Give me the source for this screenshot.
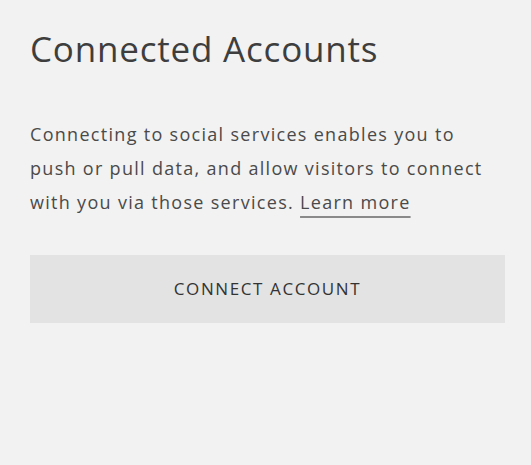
import React from 'react';

function App() {
    return (
        <div className="min-h-screen bg-[#f2f2f2] text-[#3e3e3e] font-['Open_Sans',sans-serif]">
            <div className="pl-[30px] pr-[26px] pt-[25px]">
                <h1 className="text-[35px] leading-[48px] font-normal tracking-[0.8px]">Connected Accounts</h1>

                <p className="mt-[44px] text-[18px] leading-[34px] text-[#4a4a4a] tracking-[1.3px]">
                    Connecting to social services enables you to push or pull data, and allow visitors to connect
                    with you via those services.{' '}
                    <a href="#" className="underline decoration-2 underline-offset-[7px] decoration-[#8a8a8a]">
                        Learn more
                    </a>
                </p>

                <button className="mt-[36px] w-full h-[68px] bg-[#e3e3e3] text-[17px] tracking-[1.6px] text-[#333] uppercase">
                    Connect Account
                </button>
            </div>
        </div>
    );
}

export default App;
